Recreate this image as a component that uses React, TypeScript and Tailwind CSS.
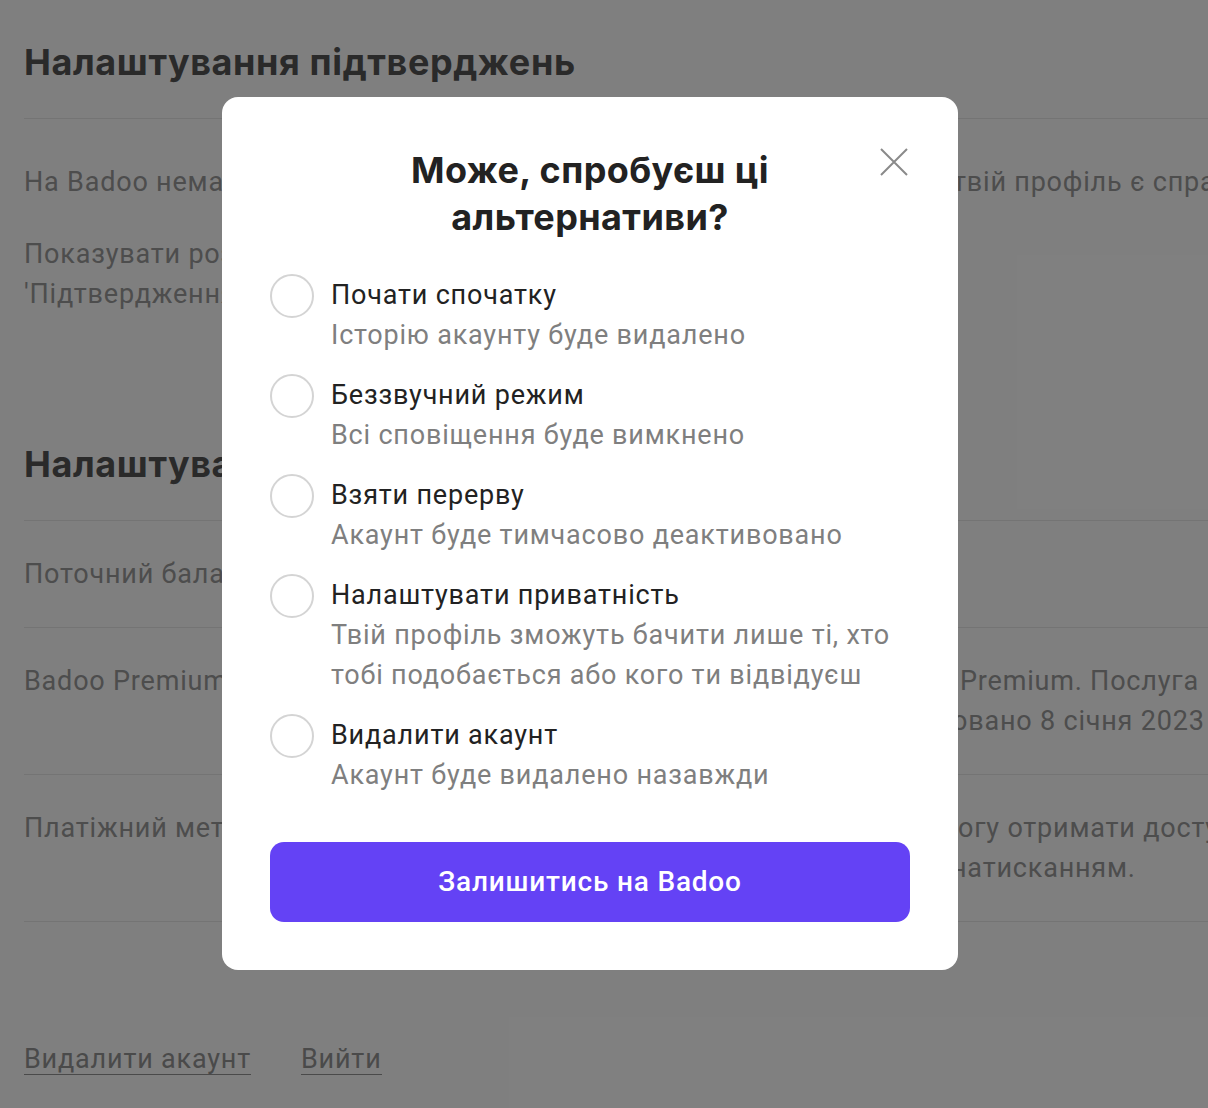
import React, { useState } from 'react';

// Settings page behind a "try alternatives" modal
const options = [
  { id: 'restart', title: 'Почати спочатку', desc: ['Історію акаунту буде видалено'] },
  { id: 'mute', title: 'Беззвучний режим', desc: ['Всі сповіщення буде вимкнено'] },
  { id: 'pause', title: 'Взяти перерву', desc: ['Акаунт буде тимчасово деактивовано'] },
  {
    id: 'privacy',
    title: 'Налаштувати приватність',
    desc: ['Твій профіль зможуть бачити лише ті, хто', 'тобі подобається або кого ти відвідуєш'],
  },
  { id: 'delete', title: 'Видалити акаунт', desc: ['Акаунт буде видалено назавжди'] },
];

const heading = "text-[36px] leading-[44px] font-bold tracking-[0.6px] text-[#555] font-['Inter',sans-serif]";

const SettingsBackground: React.FC = () => (
  <div className="w-[1600px] pl-6 text-[27px] leading-[40px] tracking-[0.8px] text-[#9a9a9a] font-['Roboto',sans-serif] whitespace-nowrap">
    <h2 className={`pt-[40px] pb-[34px] ${heading}`}>Налаштування підтверджень</h2>
    <div className="border-t border-[#e8e8e8]" />
    <div className="mt-[43px] grid grid-cols-[929px_1fr]">
      <span className="overflow-hidden">На Badoo немає фальшивих профілів. Підтверди, що</span>
      <span>твій профіль є справжнім</span>
    </div>
    <p className="mt-[32px]">
      Показувати розділ <br />
      'Підтвердження' у профілі
    </p>

    <h2 className={`mt-[128px] pb-[34px] ${heading}`}>Налаштування оплат</h2>
    <div className="border-t border-[#e8e8e8]" />
    <div className="py-[33px]">Поточний баланс</div>
    <div className="border-t border-[#e8e8e8]" />
    <div className="py-[33px]">
      <div className="grid grid-cols-[936px_1fr]">
        <span className="overflow-hidden">Badoo Premium</span>
        <span>Premium. Послуга</span>
      </div>
      <div className="grid grid-cols-[928px_1fr]">
        <span />
        <span>овано 8 січня 2023</span>
      </div>
    </div>
    <div className="border-t border-[#e8e8e8]" />
    <div className="py-[33px]">
      <div className="grid grid-cols-[934px_1fr]">
        <span className="overflow-hidden">Платіжний метод</span>
        <span>огу отримати доступ</span>
      </div>
      <div className="grid grid-cols-[927px_1fr]">
        <span />
        <span>натисканням.</span>
      </div>
    </div>
    <div className="border-t border-[#e8e8e8]" />
    <div className="mt-[122px] flex gap-[50px] text-[#949494]">
      <span className="border-b border-[#949494] leading-[30px]">Видалити акаунт</span>
      <span className="border-b border-[#949494] leading-[30px]">Вийти</span>
    </div>
  </div>
);

const AlternativesModal: React.FC = () => {
  const [selected, setSelected] = useState<string | null>(null);

  return (
    <div className="relative ml-[222px] mt-[97px] w-[736px] rounded-2xl bg-white px-12 pt-[50px] pb-12">
      <button className="absolute right-[50px] top-[51px] text-[#8a8a8a]" aria-label="Закрити">
        <svg width="28" height="28" viewBox="0 0 28 28" fill="none" stroke="currentColor" strokeWidth="2">
          <path d="M1 1L27 27M27 1L1 27" />
        </svg>
      </button>

      <h1 className="mx-auto w-[440px] text-center text-[36px] leading-[47px] font-bold tracking-[0.4px] text-[#222] font-['Inter',sans-serif]">
        Може, спробуєш ці альтернативи?
      </h1>

      <div className="mt-[34px] flex flex-col gap-5 font-['Roboto',sans-serif]">
        {options.map((opt) => (
          <label key={opt.id} className="flex items-start gap-[17px] cursor-pointer" onClick={() => setSelected(opt.id)}>
            <span
              className={`mt-[-1px] h-11 w-11 shrink-0 rounded-full border-2 ${
                selected === opt.id ? 'border-[#6442f5]' : 'border-[#d4d4d4]'
              }`}
            />
            <span className="flex flex-col text-[27px] leading-[40px] tracking-[0.8px]">
              <span className="text-[#222]">{opt.title}</span>
              {opt.desc.map((line) => (
                <span key={line} className="text-[#7f7f7f]">
                  {line}
                </span>
              ))}
            </span>
          </label>
        ))}
      </div>

      <button className="mt-[47px] h-20 w-full rounded-[14px] bg-[#6442f5] text-[28px] font-medium tracking-[0.8px] text-white font-['Roboto',sans-serif]">
        Залишитись на Badoo
      </button>
    </div>
  );
};

export default function App() {
  return (
    <div className="relative h-[1108px] w-full overflow-hidden bg-white">
      <SettingsBackground />
      <div className="absolute inset-0 bg-black/50">
        <AlternativesModal />
      </div>
    </div>
  );
}
